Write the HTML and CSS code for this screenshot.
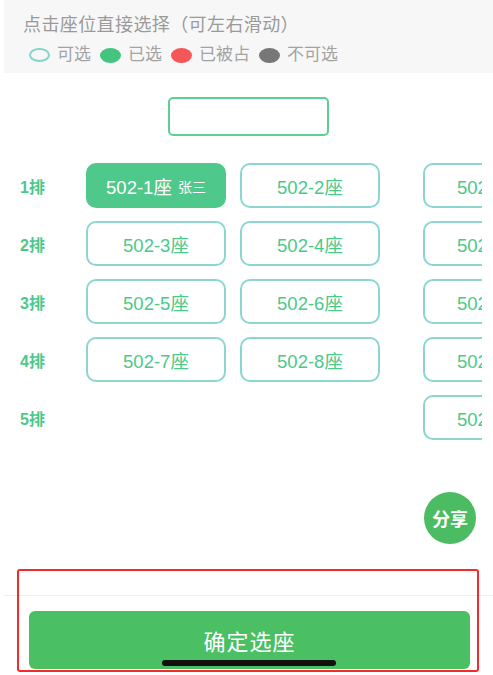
FILE: index.html
```html
<!DOCTYPE html>
<html lang="zh-CN">
<head>
  <meta charset="UTF-8">
  <meta name="viewport" content="width=device-width, initial-scale=1.0">
  <title>选座</title>
  <link rel="stylesheet" href="styles.css">
</head>
<body>
  <div id="page">
    <header class="tips">
      <p class="tips-title">点击座位直接选择（可左右滑动）</p>
      <ul class="legend">
        <li><span class="dot dot-free"></span>可选</li>
        <li><span class="dot dot-mine"></span>已选</li>
        <li><span class="dot dot-taken"></span>已被占</li>
        <li><span class="dot dot-off"></span>不可选</li>
      </ul>
    </header>

    <div class="code-box"></div>

    <section class="seat-map">
      <div class="seat-row">
        <span class="row-label">1排</span>
        <button class="seat selected">502-1座 <small>张三</small></button>
        <button class="seat">502-2座</button>
        <button class="seat far">502-9座</button>
      </div>
      <div class="seat-row">
        <span class="row-label">2排</span>
        <button class="seat">502-3座</button>
        <button class="seat">502-4座</button>
        <button class="seat far">502-10座</button>
      </div>
      <div class="seat-row">
        <span class="row-label">3排</span>
        <button class="seat">502-5座</button>
        <button class="seat">502-6座</button>
        <button class="seat far">502-11座</button>
      </div>
      <div class="seat-row">
        <span class="row-label">4排</span>
        <button class="seat">502-7座</button>
        <button class="seat">502-8座</button>
        <button class="seat far">502-12座</button>
      </div>
      <div class="seat-row">
        <span class="row-label">5排</span>
        <span class="seat empty"></span>
        <span class="seat empty"></span>
        <button class="seat far">502-13座</button>
      </div>
    </section>

    <div class="share-line">
      <button class="share-btn">分享</button>
    </div>

    <footer class="bottom-bar">
      <button class="confirm-btn">确定选座</button>
    </footer>

    <!-- overlays -->
    <div class="mark-box"></div>
    <div class="home-bar"></div>
  </div>
</body>
</html>
```

FILE: styles.css
```css
* {
  margin: 0;
  padding: 0;
  box-sizing: border-box;
}

body {
  font-family: "Liberation Sans", "Noto Sans CJK SC", sans-serif;
  background-color: #fff;
  color: #333;
  width: 493px;
  height: 675px;
  overflow: hidden;
}

#page {
  position: relative;
  height: 675px;
}

button {
  font-family: inherit;
  border: none;
  background: none;
  cursor: pointer;
}

/* Top tips */
.tips {
  margin-left: 4px;
  height: 73px;
  background-color: #f7f7f7;
  padding: 12px 0 0 19px;
}

.tips-title {
  font-size: 18px;
  line-height: 26px;
  color: #9a9a9a;
  letter-spacing: 0.4px;
}

.legend {
  list-style: none;
  display: flex;
  align-items: center;
  margin-top: 5px;
  padding-left: 6px;
  font-size: 17px;
  line-height: 24px;
  color: #a3a3a3;
}

.legend li {
  display: flex;
  align-items: center;
  margin-right: 9px;
}

.dot {
  display: inline-block;
  width: 21px;
  height: 15px;
  border-radius: 50%;
  margin-right: 7px;
}

.dot-free {
  height: 14px;
  border: 2.5px solid #84d3cf;
}

.dot-mine {
  background-color: #45c47f;
}

.dot-taken {
  background-color: #f55657;
}

.dot-off {
  background-color: #777;
}

/* Room code box */
.code-box {
  width: 161px;
  height: 39px;
  margin: 24px 0 0 168px;
  border: 2px solid #5dcf92;
  border-radius: 5px;
}

/* Seats */
.seat-map {
  margin: 27px 11px 0 20px;
  overflow: hidden;
}

.seat-row {
  display: flex;
  align-items: center;
  height: 45px;
  margin-bottom: 13px;
}

.seat-row:last-child {
  margin-bottom: 0;
}

.row-label {
  flex-shrink: 0;
  width: 66px;
  font-size: 16px;
  font-weight: bold;
  color: #4cc98a;
}

.seat {
  flex-shrink: 0;
  width: 140px;
  height: 45px;
  margin-right: 14px;
  border: 2px solid #8bd6d1;
  border-radius: 10px;
  font-size: 18.5px;
  color: #4cc98a;
  display: flex;
  align-items: center;
  justify-content: center;
}

.seat small {
  font-size: 14px;
  margin-left: 6px;
}

.seat.selected {
  background-color: #4ec98b;
  border-color: #4ec98b;
  color: #fff;
}

.seat.empty {
  border-color: transparent;
}

.seat.far {
  margin-left: 29px;
  width: 140px;
  justify-content: flex-start;
  padding-left: 32px;
}

/* Share */
.share-line {
  display: flex;
  justify-content: flex-end;
  padding-right: 17px;
  margin-top: 52px;
}

.share-btn {
  width: 52px;
  height: 52px;
  border-radius: 50%;
  background-color: #4cbc62;
  color: #fff;
  font-size: 18px;
  font-weight: bold;
}

/* Bottom */
.bottom-bar {
  margin: 51px 0 0 4px;
  border-top: 1px solid #efefef;
  padding: 15px 23px 0 25px;
}

.confirm-btn {
  width: 100%;
  height: 58px;
  border-radius: 6px;
  background-color: #4bbf63;
  color: #fff;
  font-size: 22px;
  letter-spacing: 1px;
}

.mark-box {
  position: absolute;
  left: 17px;
  top: 569px;
  width: 462px;
  height: 103px;
  border: 2.5px solid #f52a2a;
  border-radius: 3px;
}

.home-bar {
  position: absolute;
  left: 162px;
  top: 660px;
  width: 174px;
  height: 6px;
  border-radius: 3px;
  background-color: #111;
}
```
